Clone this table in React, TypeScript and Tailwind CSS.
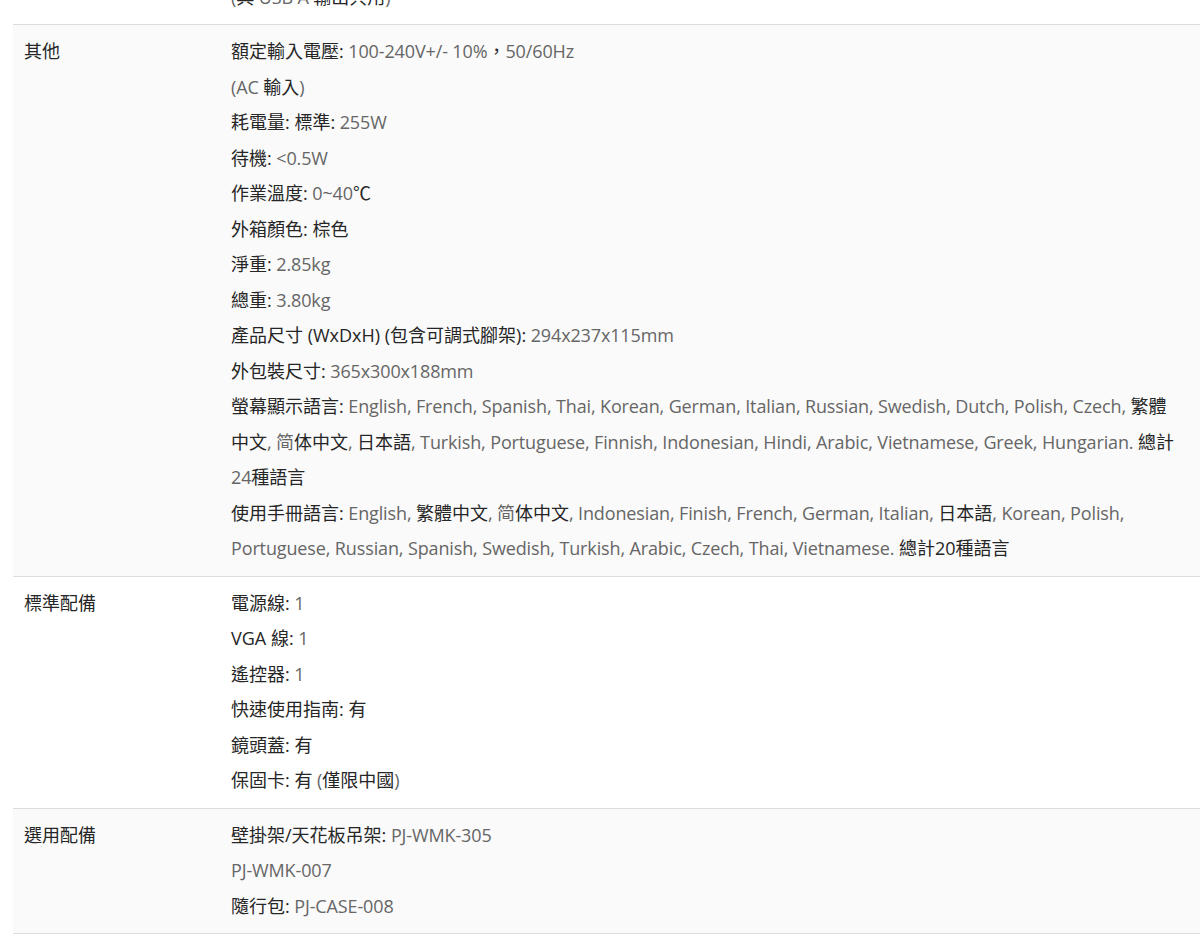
import type { ReactNode } from "react";

// dark CJK runs inside a grey value line
function K({ children }: { children: ReactNode }) {
  return <span className="tracking-normal text-[#262626]">{children}</span>;
}

interface SpecRow {
  label: string;
  lines: ReactNode[];
  striped?: boolean;
}

const rows: SpecRow[] = [
  {
    label: "",
    lines: [
      <>
        (<K>與</K> USB A <K>輸出共用</K>)
      </>,
    ],
  },
  {
    label: "其他",
    striped: true,
    lines: [
      <>
        <K>額定輸入電壓:</K> 100-240V+/- 10%<K>，</K>50/60Hz
      </>,
      <>
        (AC <K>輸入</K>)
      </>,
      <>
        <K>耗電量: 標準:</K> 255W
      </>,
      <>
        <K>待機:</K> &lt;0.5W
      </>,
      <>
        <K>作業溫度:</K> 0~40<K>℃</K>
      </>,
      <>
        <K>外箱顏色: 棕色</K>
      </>,
      <>
        <K>淨重:</K> 2.85kg
      </>,
      <>
        <K>總重:</K> 3.80kg
      </>,
      <>
        <K>產品尺寸 (WxDxH) (包含可調式腳架):</K> 294x237x115mm
      </>,
      <>
        <K>外包裝尺寸:</K> 365x300x188mm
      </>,
      <>
        <K>螢幕顯示語言:</K> English, French, Spanish, Thai, Korean, German,
        Italian, Russian, Swedish, Dutch, Polish, Czech, <K>繁體中文</K>, 简
        <K>体中文</K>, <K>日本語</K>, Turkish, Portuguese, Finnish, Indonesian,
        Hindi, Arabic, Vietnamese, Greek, Hungarian. <K>總計</K>24
        <K>種語言</K>
      </>,
      <>
        <K>使用手冊語言:</K> English, <K>繁體中文</K>, 简<K>体中文</K>,
        Indonesian, Finish, French, German, Italian, <K>日本語</K>, Korean,
        Polish, Portuguese, Russian, Spanish, Swedish, Turkish, Arabic, Czech,
        Thai, Vietnamese. <K>總計20種語言</K>
      </>,
    ],
  },
  {
    label: "標準配備",
    lines: [
      <>
        <K>電源線:</K> 1
      </>,
      <>
        <K>VGA 線:</K> 1
      </>,
      <>
        <K>遙控器:</K> 1
      </>,
      <>
        <K>快速使用指南: 有</K>
      </>,
      <>
        <K>鏡頭蓋: 有</K>
      </>,
      <>
        <K>保固卡: 有</K> (<K>僅限中國</K>)
      </>,
    ],
  },
  {
    label: "選用配備",
    striped: true,
    lines: [
      <>
        <K>壁掛架/天花板吊架:</K> PJ-WMK-305
      </>,
      <>PJ-WMK-007</>,
      <>
        <K>隨行包:</K> PJ-CASE-008
      </>,
    ],
  },
];

export default function App() {
  return (
    <div
      className="h-[947px] overflow-hidden bg-white pl-[13px] text-[18px] leading-[35.5px]"
      style={{ fontFamily: "'Open Sans', 'Noto Sans CJK TC', sans-serif" }}
    >
      <div className="-mt-[29.5px] w-[1200px]">
        {rows.map((row, i) => (
          <div
            key={i}
            className={`flex border-b border-[#dddddd] py-[9px] ${
              row.striped ? "bg-[#fafafa]" : "bg-white"
            }`}
          >
            <div className="w-[207px] shrink-0 pl-[11px] text-[#262626]">
              {row.label}
            </div>
            <div className="w-[955px] pl-[11px] tracking-[-0.13px] text-[#666666]">
              {row.lines.map((line, j) => (
                <div key={j}>{line}</div>
              ))}
            </div>
          </div>
        ))}
      </div>
    </div>
  );
}
